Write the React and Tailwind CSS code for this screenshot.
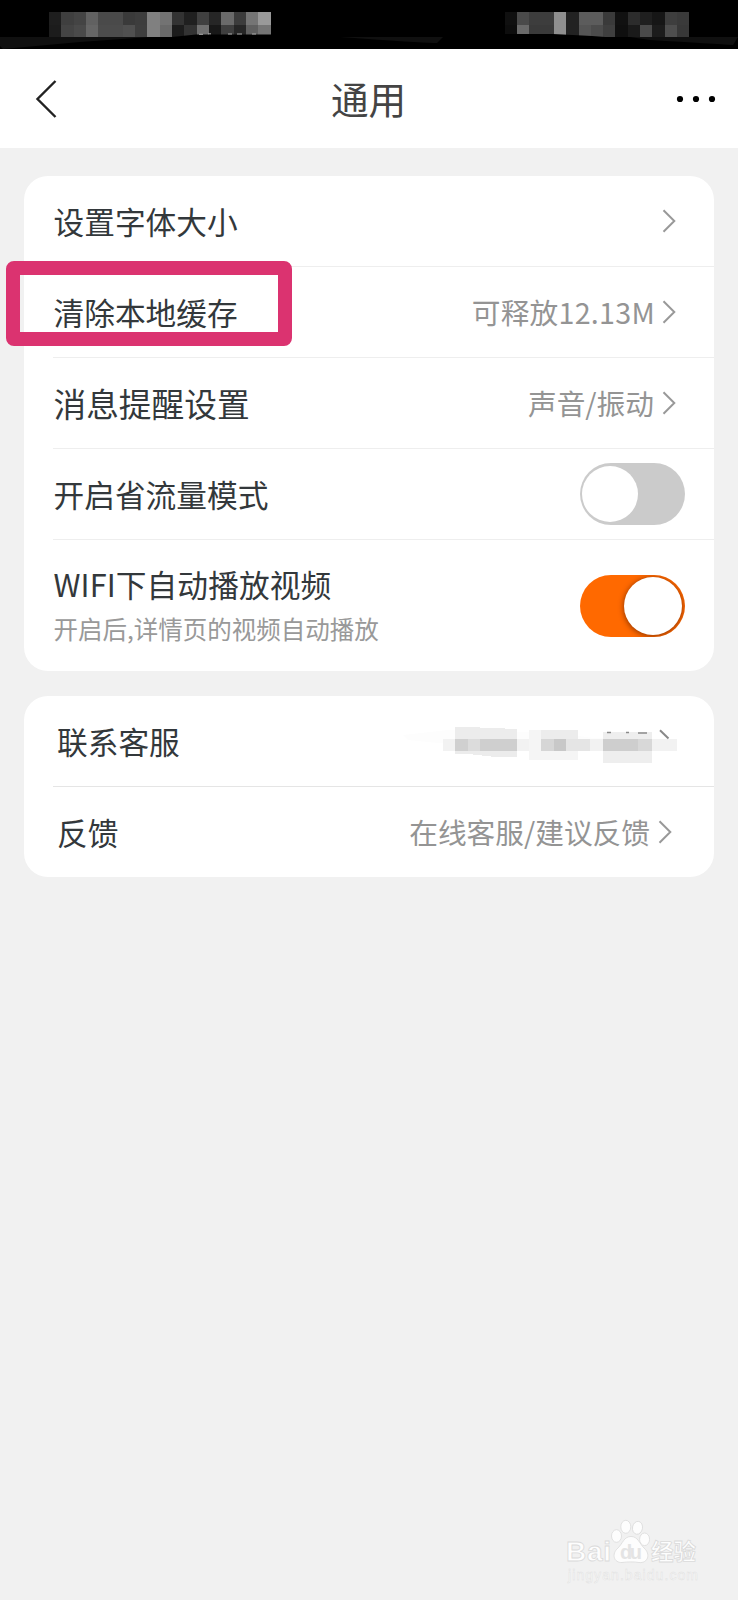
import React from 'react';
import clsx from 'clsx';

// shades of the 12.3px blocks hiding the status bar, top row then bottom row
const LEFT_BLOCKS = [
    ['#1e1e1e', '#3f3f3f', '#444444', '#616161', '#4a4a4a', '#4a4a4a', '#3a3a3a', '#3d3d3d', '#808080', '#737373', '#333333', '#202020', '#404040', '#262626', '#6a6a6a', '#3c3c3c', '#757575', '#999999'],
    ['#1c1c1c', '#444444', '#4a4a4a', '#666666', '#4c4c4c', '#4c4c4c', '#505050', '#3e3e3e', '#808080', '#6a6a6a', '#1c1c1c', '#333333', '#707070', '#181818', '#3f3f3f', '#262626', '#606060', '#757575'],
];
const RIGHT_BLOCKS = [
    ['#101010', '#4a4a4a', '#3d3d3d', '#3d3d3d', '#8f8f8f', '#222222', '#5c5c5c', '#5c5c5c', '#3a3a3a', '#111111', '#2c2c2c', '#1f1f1f', '#161616', '#3e3e3e', '#3a3a3a'],
    ['#0d0d0d', '#6a6a6a', '#3a3a3a', '#3a3a3a', '#8f8f8f', '#222222', '#555555', '#4c4c4c', '#3f3f3f', '#0f0f0f', '#1a1a1a', '#4a4a4a', '#1c1c1c', '#4e4e4e', '#383838'],
];

const Blocks = ({ rows, x, y }) => (
    <g shapeRendering="crispEdges">
        {rows.map((row, r) =>
            row.map((fill, i) => (
                <rect key={`${r}-${i}`} x={x + i * 12.3} y={y + r * 12.3} width="12.4" height="12.3" fill={fill} />
            ))
        )}
    </g>
);

const StatusBar = () => (
    <div className="h-[49px] bg-black">
        <svg width="738" height="49" viewBox="0 0 738 49">
            <path d="M0 37H150L80 42L3 49L0 46Z" fill="#101010" />
            <path d="M340 37H443L437 43Q425 43 368 39Z" fill="#101010" />
            <path d="M630 37H738L733 45Q715 44 650 40Z" fill="#101010" />
            <Blocks rows={LEFT_BLOCKS} x={49} y={12.3} />
            <Blocks rows={RIGHT_BLOCKS} x={504.7} y={12.3} />
            <path d="M172 37L196 34.6H271V38H172ZM504 34H553L592 36L612 37.5H504Z" fill="#000" />
            <path d="M199 34.3H203M208 33.8H211M228 34H232M237 34H242M252 34H256" stroke="#aaa" strokeWidth="1" />
        </svg>
    </div>
);

const Header = () => (
    <header className="grid h-[99px] grid-cols-[1fr_auto_1fr] items-center bg-white pr-[22px] pl-[35px]">
        <svg width="46" height="40" viewBox="0 0 46 40" fill="none" stroke="#222" strokeWidth="2.4">
            <path d="M20.5 2L2.5 20L20.5 38" />
        </svg>
        <h1 className="-mt-[2px] mr-[14px] text-[37.6px] leading-none text-[#444]">通用</h1>
        <svg width="40" height="8" viewBox="0 0 40 8" className="justify-self-end">
            <circle cx="4" cy="4" r="3.1" />
            <circle cx="20" cy="4" r="3.1" />
            <circle cx="36" cy="4" r="3.1" />
        </svg>
    </header>
);

const Chevron = () => (
    <svg width="14" height="24" viewBox="0 0 14 24" fill="none" stroke="#999" strokeWidth="2">
        <path d="M1.5 1.2L12.3 12L1.5 22.8" />
    </svg>
);

const Toggle = ({ on }) => (
    <div
        className={clsx(
            'flex h-[62px] w-[105px] items-center overflow-hidden rounded-full',
            on ? 'justify-end bg-[#ff6900] pr-[3px]' : 'bg-[#cbcbcb] pl-[2px]'
        )}
    >
        <div
            className={clsx(
                'rounded-full bg-white',
                on ? 'size-[58px] shadow-[0_1px_5px_1px_rgba(90,30,0,0.55)]' : 'size-[56px]'
            )}
        />
    </div>
);

const Row = ({ label, value, labelClass, valueClass, className, children }) => (
    <div className={clsx('flex items-center justify-between', className)}>
        <span className={clsx('leading-none', labelClass)}>{label}</span>
        {children || (
            <div className="flex items-center gap-[8px]">
                <span className={clsx('pt-[1px] text-[28.7px] leading-none text-[#949494]', valueClass)}>{value}</span>
                <Chevron />
            </div>
        )}
    </div>
);

// customer service number, pixelated out
const HiddenNumber = () => (
    <svg width="312" height="60" viewBox="0 0 312 60" className="mt-[10px]">
        <path d="M35 19L80 14L190 17L225 22L290 23V35L200 34L165 33L70 27L40 24Z" fill="#fdfdfd" />
        <g shapeRendering="crispEdges">
            <path d="M87 11.5L100 11L149 13V41L128 41L100 38H87Z" fill="#ececec" />
            <rect x="75" y="23" width="234" height="12" fill="#f2f2f2" />
            <rect x="87" y="23" width="13" height="12" fill="#d0d0d0" />
            <rect x="100" y="23" width="12" height="12" fill="#dcdcdc" />
            <rect x="112" y="23" width="37" height="12" fill="#cfcfcf" />
            <rect x="161" y="14" width="49" height="30" fill="#f5f5f5" />
            <rect x="173" y="14" width="37" height="9" fill="#ececec" />
            <rect x="173" y="23" width="13" height="12" fill="#d6d6d6" />
            <rect x="186" y="23" width="12" height="12" fill="#c8c8c8" />
            <rect x="198" y="23" width="24" height="12" fill="#e5e5e5" />
            <rect x="235" y="16" width="49" height="31" fill="#eeeeee" />
            <rect x="235" y="23" width="35" height="12" fill="#cecece" />
            <rect x="270" y="23" width="14" height="12" fill="#d8d8d8" />
        </g>
        <path d="M239 16.5H243M258 16.5H261M270 17H279" stroke="#8a8a8a" strokeWidth="1.6" />
        <path d="M292 14.2L300.5 22.5" stroke="#888" strokeWidth="2" />
    </svg>
);

const Watermark = () => (
    <svg className="absolute top-[1510px] left-[560px]" width="150" height="76" viewBox="0 0 150 76">
        <g fill="#fdfdfd" stroke="#dadada" strokeWidth="0.8">
            <text x="6" y="51" textLength="45" fontSize="28" fontWeight="700" fontFamily="Liberation Sans, sans-serif">Bai</text>
            <ellipse cx="56.5" cy="26" rx="5" ry="6.3" />
            <ellipse cx="65.8" cy="16.8" rx="5" ry="6.5" />
            <ellipse cx="77.5" cy="17.8" rx="5" ry="6.5" transform="rotate(10 77.5 17.8)" />
            <ellipse cx="84.6" cy="29.3" rx="5" ry="6.3" />
            <path d="M71 26.5C64 26.5 63 33 58 38C51 44 54 53 62 52.5C68 51.7 74 51.7 79 52.5C88 53.5 91 44 84 38C79 33 78 26.5 71 26.5Z" />
            <text x="91" y="50" textLength="45" fontSize="22.5" fontWeight="700">经验</text>
        </g>
        <text x="60" y="49" textLength="22" fontSize="20" fontWeight="700" fontFamily="Liberation Sans, sans-serif" fill="#e4e4e4">du</text>
        <text x="8" y="69.5" textLength="130" fontSize="14" fontFamily="Liberation Sans, sans-serif" fill="#fafafa" stroke="#dfdfdf" strokeWidth="0.45">jingyan.baidu.com</text>
    </svg>
);

export default function App() {
    return (
        <div className="relative h-[1600px] w-[738px] overflow-hidden bg-[#f1f1f1] font-['Noto_Sans_CJK_SC',sans-serif] text-[#33383b]">
            <StatusBar />
            <Header />

            <main className="flex flex-col gap-[25px] pt-[28px] pr-[24px] pl-[24px]">
                <section className="rounded-[24px] bg-white pl-[29px]">
                    <Row label="设置字体大小" labelClass="pl-[0.5px] text-[30.7px]" className="h-[91px] border-b border-[#eeeeee] pr-[38px]" />
                    <Row label="清除本地缓存" value="可释放12.13M" labelClass="pl-[0.5px] text-[30.7px]" valueClass="-mr-[1px] tracking-[0.25px]" className="h-[91px] border-b border-[#eeeeee] pr-[38px]" />
                    <Row label="消息提醒设置" value="声音/振动" labelClass="pl-[0.5px] text-[32.7px]" className="h-[91px] border-b border-[#eeeeee] pr-[38px]" />
                    <Row label="开启省流量模式" labelClass="pl-[0.5px] text-[30.7px]" className="h-[91px] border-b border-[#eeeeee] pr-[29px]">
                        <Toggle />
                    </Row>
                    <div className="flex h-[131px] items-center justify-between pr-[29px]">
                        <div className="flex flex-col gap-[17px] pl-[0.5px]">
                            <span className="text-[30.7px] leading-none tracking-[0.1px]">WIFI下自动播放视频</span>
                            <span className="text-[24.5px] leading-none text-[#999]">开启后,详情页的视频自动播放</span>
                        </div>
                        <Toggle on />
                    </div>
                </section>

                <section className="rounded-[24px] bg-white pl-[29px]">
                    <Row label="联系客服" labelClass="pl-[4px] text-[30.7px]" className="h-[91px] border-b border-[#e5e5e5] pr-[34px]">
                        <HiddenNumber />
                    </Row>
                    <Row label="反馈" value="在线客服/建议反馈" labelClass="pl-[4px] text-[30.7px]" className="h-[90px] pr-[42px]" />
                </section>
            </main>

            {/* highlight around the clear cache entry */}
            <div className="absolute top-[261px] left-[6px] h-[85px] w-[286px] rounded-[8px] border-[14px] border-[#db3370]" />
            <Watermark />
        </div>
    );
}
